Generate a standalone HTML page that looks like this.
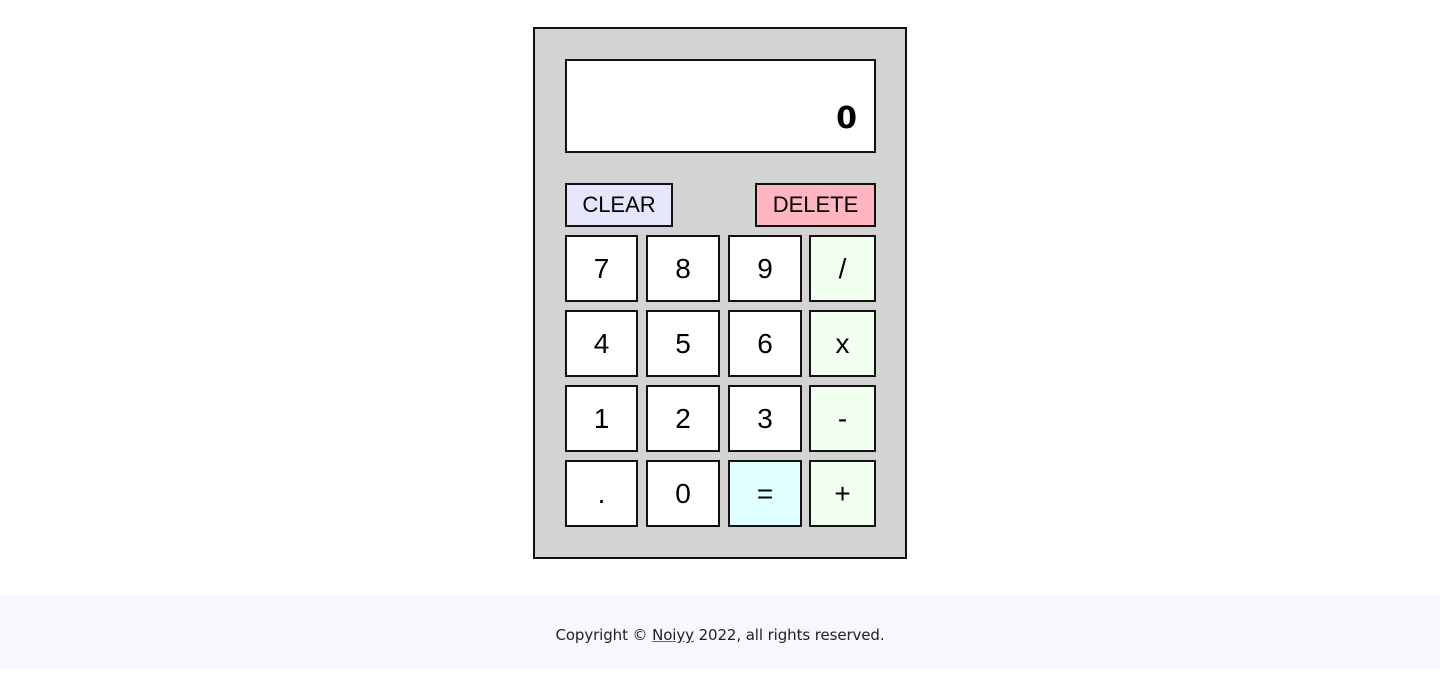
<!DOCTYPE html>
<html><head><style>
body{margin:0;width:1440px;height:669px;background:#fff;position:relative;font-family:"Liberation Sans",Arial,sans-serif;overflow:hidden}
.a{position:absolute;box-sizing:border-box;border:2px solid #111;display:flex;align-items:center;justify-content:center;color:#000}
.b{font-size:28px;background:#fff}
.op{background:#f0fff0}
</style></head><body>
<div class="a" style="left:533px;top:27px;width:374px;height:532px;background:#d3d3d3;border-width:2px"></div>
<div class="a" style="left:565px;top:59px;width:311px;height:94px;background:#fff;justify-content:flex-end;padding:24px 17px 0 0;font-size:30px;font-weight:bold;font-family:'DejaVu Sans',sans-serif">0</div>
<div class="a" style="left:565px;top:183px;width:108px;height:44px;background:#e6e6fa;font-size:22px">CLEAR</div>
<div class="a" style="left:755px;top:183px;width:121px;height:44px;background:#ffb6c1;font-size:22px">DELETE</div>

<div class="a b" style="left:565px;top:235px;width:73px;height:67px">7</div>
<div class="a b" style="left:646px;top:235px;width:74px;height:67px">8</div>
<div class="a b" style="left:728px;top:235px;width:74px;height:67px">9</div>
<div class="a b op" style="left:809px;top:235px;width:67px;height:67px">/</div>

<div class="a b" style="left:565px;top:310px;width:73px;height:67px">4</div>
<div class="a b" style="left:646px;top:310px;width:74px;height:67px">5</div>
<div class="a b" style="left:728px;top:310px;width:74px;height:67px">6</div>
<div class="a b op" style="left:809px;top:310px;width:67px;height:67px">x</div>

<div class="a b" style="left:565px;top:385px;width:73px;height:67px">1</div>
<div class="a b" style="left:646px;top:385px;width:74px;height:67px">2</div>
<div class="a b" style="left:728px;top:385px;width:74px;height:67px">3</div>
<div class="a b op" style="left:809px;top:385px;width:67px;height:67px">-</div>

<div class="a b" style="left:565px;top:460px;width:73px;height:67px">.</div>
<div class="a b" style="left:646px;top:460px;width:74px;height:67px">0</div>
<div class="a b" style="left:728px;top:460px;width:74px;height:67px;background:#e0ffff">=</div>
<div class="a b op" style="left:809px;top:460px;width:67px;height:67px">+</div>

<div style="position:absolute;left:0;top:595px;width:1440px;height:74px;background:#f8f8fc;text-align:center;line-height:80px;font-size:15px;color:#222;font-family:'DejaVu Sans',sans-serif;letter-spacing:-0.1px">Copyright © <span style="text-decoration:underline;text-decoration-color:#e0208a">Noiyy</span> 2022, all rights reserved.</div>
</body></html>
